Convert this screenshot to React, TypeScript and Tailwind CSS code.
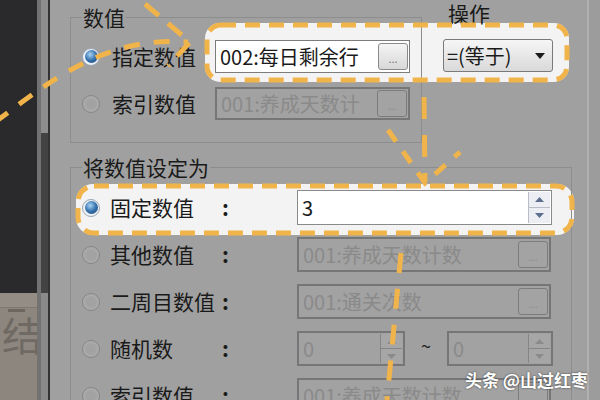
import React from "react";

function Radio({ on }: { on?: boolean }) {
  if (on)
    return (
      <div className="w-[18px] h-[18px] rounded-full border border-[#9aa6b4] bg-[#eef1f5] flex items-center justify-center shrink-0">
        <div className="w-[13px] h-[13px] rounded-full bg-[radial-gradient(circle_at_40%_35%,#a8d4f5_0%,#3672ae_50%,#1b426e_100%)]" />
      </div>
    );
  return (
    <div className="w-[18px] h-[18px] rounded-full border border-[#858585] bg-[radial-gradient(circle_at_50%_50%,#a2a2a2_40%,#b8b8b8_100%)] shrink-0" />
  );
}

function Dots({ active }: { active?: boolean }) {
  return (
    <div
      className={
        active
          ? "w-[30px] h-[27px] rounded-[3px] border border-[#8a8a8a] bg-[linear-gradient(#f4f4f4,#d8d8d8)] flex items-end justify-center pb-[5px] text-[11px] text-[#777] leading-none shrink-0"
          : "w-[30px] h-[27px] rounded-[3px] border border-[#7c7c7c] bg-[#a3a3a3] flex items-end justify-center pb-[5px] text-[11px] text-[#8c8c8c] leading-none shrink-0"
      }
    >
      ...
    </div>
  );
}

function Field({ text, active, wide }: { text: string; active?: boolean; wide?: boolean }) {
  return (
    <div
      className={
        (wide ? "w-[254px] h-[35px] " : "w-[195px] h-[33px] ") +
        (active
          ? "bg-white border border-[#7c7c7c] text-[#1a1a1a]"
          : "bg-[#a2a2a2] border-2 border-[#767676] text-[#8a8a8a]") +
        " flex items-center justify-between pl-[4px] pr-[1px] text-[20px] leading-none"
      }
    >
      <span className="whitespace-nowrap">{text}</span>
      <Dots active={active} />
    </div>
  );
}

function Arrow({ up, active }: { up?: boolean; active?: boolean }) {
  return (
    <svg width="9" height="5" viewBox="0 0 9 5">
      <path d={up ? "M0 5 L4.5 0 L9 5 Z" : "M0 0 L4.5 5 L9 0 Z"} fill={active ? "#5d6f8f" : "#8a8a8a"} />
    </svg>
  );
}

function Spinner({ active }: { active?: boolean }) {
  return (
    <div
      className={
        active
          ? "w-[22px] h-full flex flex-col border-l border-[#b8bcc6] shrink-0"
          : "w-[22px] h-full flex flex-col border-l border-[#858585] shrink-0"
      }
    >
      <div
        className={
          active
            ? "flex-1 flex items-center justify-center bg-[#eceef3] border-b border-[#b8bcc6]"
            : "flex-1 flex items-center justify-center bg-[#a6a6a6] border-b border-[#858585]"
        }
      >
        <Arrow up active={active} />
      </div>
      <div
        className={
          active
            ? "flex-1 flex items-center justify-center bg-[#eceef3]"
            : "flex-1 flex items-center justify-center bg-[#a6a6a6]"
        }
      >
        <Arrow active={active} />
      </div>
    </div>
  );
}

function SpinField({ text, active, w }: { text: string; active?: boolean; w: string }) {
  return (
    <div
      className={
        w +
        (active
          ? " h-[35px] bg-white border border-[#8a8a8a] text-[#1a1a1a]"
          : " h-[35px] bg-[#a2a2a2] border-2 border-[#767676] text-[#8a8a8a]") +
        " flex items-center justify-between pl-[4px] p-[1px] text-[20px] leading-none"
      }
    >
      <span>{text}</span>
      <Spinner active={active} />
    </div>
  );
}

function Legend({ children }: { children: React.ReactNode }) {
  return (
    <div className="-mt-[14px] ml-[11px] px-[1px] w-fit bg-[#a0a0a0] text-[21px] leading-[26px] text-[#1a1a1a] whitespace-nowrap">
      {children}
    </div>
  );
}

function Row2({ label, children, on }: { label: string; children: React.ReactNode; on?: boolean }) {
  return (
    <div className="h-[35px] flex items-center">
      <Radio on={on} />
      <div className="ml-[10px] w-[112px] text-[21px] text-[#1a1a1a] whitespace-nowrap leading-none">{label}</div>
      <div className="w-[75px] text-[21px] font-bold text-[#1a1a1a] leading-none">:</div>
      {children}
    </div>
  );
}

export default function App() {
  return (
    <div className="w-[600px] h-[400px] relative overflow-hidden flex bg-[#a0a0a0] font-['Noto_Sans_CJK_SC',sans-serif]">
      {/* left background strip */}
      <div className="w-[37px] h-full flex flex-col bg-[#2a292b] shrink-0">
        <div className="h-[293px]" />
        <div className="flex-1 bg-[#8d867e] flex flex-col overflow-hidden">
          <div className="h-[15px] bg-[#948d85] border-b border-[#7f7870]" />
          <div className="ml-[8px] mt-[1px] w-[17px] h-[3px] bg-[#6d6760]" />
          <div className="ml-[2px] mt-[2px] text-[40px] leading-none text-[#6f6963] whitespace-nowrap">结</div>
        </div>
      </div>
      {/* scroll strip */}
      <div className="w-[13px] h-full flex shrink-0">
        <div className="w-[4px] bg-[#727272]" />
        <div className="w-[7px] flex flex-col">
          <div className="h-[133px] bg-[#8e8e8e]" />
          <div className="h-[160px] bg-[#434343]" />
          <div className="flex-1 bg-[#8a8a8a]" />
        </div>
        <div className="w-[2px] bg-[#333333]" />
      </div>

      {/* dialog */}
      <div className="flex-1 flex h-full relative z-10">
        <div className="w-[537px] h-full flex flex-col pl-[20px]">
          <div className="h-[143px] flex items-start">
            <div className="mt-[17px] w-[352px] h-[126px] border border-[#8d8d8d] flex flex-col">
              <Legend>数值</Legend>
              <div className="mt-[10px] pl-[11px] flex flex-col gap-[14px]">
                <div className="h-[33px] flex items-center">
                  <Radio on />
                  <div className="ml-[12px] w-[103px] text-[21px] text-[#1a1a1a] leading-none">指定数值</div>
                  <Field text="002:每日剩余行" active />
                </div>
                <div className="h-[33px] flex items-center">
                  <Radio />
                  <div className="ml-[12px] w-[103px] text-[21px] text-[#1a1a1a] leading-none">索引数值</div>
                  <Field text="001:养成天数计" />
                </div>
              </div>
            </div>
            <div className="ml-[11px] mt-[14px] w-[139px] h-[129px] flex flex-col">
              <div className="-mt-[14px] ml-[14px] px-[1px] w-fit text-[21px] leading-[26px] text-[#1a1a1a]">操作</div>
              <div className="mt-[13px] ml-[10px] w-[110px] h-[33px] rounded-[3px] border border-[#7a7a7a] bg-[linear-gradient(#f6f6f6,#d9d9d9)] flex items-center justify-between pl-[3px] pr-[7px] text-[20px] leading-none text-[#1a1a1a]">
                <span className="whitespace-nowrap">=(等于)</span>
                <svg width="10" height="6" viewBox="0 0 10 6">
                  <path d="M0 0 L10 0 L5 6 Z" fill="#1a1a1a" />
                </svg>
              </div>
            </div>
          </div>

          <div className="mt-[24px] w-[502px] h-[300px] border border-[#8d8d8d] flex flex-col shrink-0">
            <Legend>将数值设定为</Legend>
            <div className="mt-[10px] pl-[11px] flex flex-col gap-[12px]">
              <Row2 label="固定数值" on>
                <SpinField text="3" active w="w-[255px]" />
              </Row2>
              <Row2 label="其他数值">
                <Field text="001:养成天数计数" wide />
              </Row2>
              <Row2 label="二周目数值">
                <Field text="001:通关次数" wide />
              </Row2>
              <Row2 label="随机数">
                <SpinField text="0" w="w-[108px]" />
                <div className="w-[42px] -mt-[8px] text-center text-[18px] text-[#1a1a1a] leading-none">~</div>
                <SpinField text="0" w="w-[106px]" />
              </Row2>
              <Row2 label="索引数值">
                <Field text="001:养成天数计数" wide />
              </Row2>
            </div>
          </div>
        </div>
        <div className="w-[2px] h-full bg-[#b0b0b0]" />
        <div className="flex-1 h-full bg-[#9c9c9c]" />
      </div>

      {/* highlight fills (under content) */}
      <svg className="absolute inset-0 z-[5] pointer-events-none" width="600" height="400">
        <rect x="205" y="23" width="364" height="59" rx="15" fill="#f3f3f3" />
        <rect x="76" y="184" width="498" height="51" rx="17" fill="#f3f3f3" />
      </svg>

      {/* annotation strokes */}
      <svg className="absolute inset-0 z-20 pointer-events-none" width="600" height="400">
        <g fill="none" stroke="#f0b44a" strokeWidth="5">
          <rect x="207" y="25" width="360" height="55" rx="14" strokeDasharray="15 9" />
          <rect x="78" y="186" width="494" height="47" rx="16" strokeDasharray="15 9" />
          <path d="M -5 122 C 40 90, 100 35, 188 42" strokeDasharray="16 14" />
          <path d="M 145 4 L 190 42 L 168 66" strokeDasharray="18 12" />
          <path d="M 424 97 L 425 182" strokeDasharray="22 16" />
          <path d="M 388 130 L 425 183 L 460 152" strokeDasharray="14 12" />
          <path d="M 401 253 L 387 400" strokeDasharray="20 16" />
        </g>
      </svg>

      <div className="absolute right-[12px] top-[371px] z-30 text-[17px] font-bold text-white leading-none whitespace-nowrap [text-shadow:0_0_2px_rgba(0,0,0,0.7)]">
        头条 @山过红枣
      </div>
    </div>
  );
}
